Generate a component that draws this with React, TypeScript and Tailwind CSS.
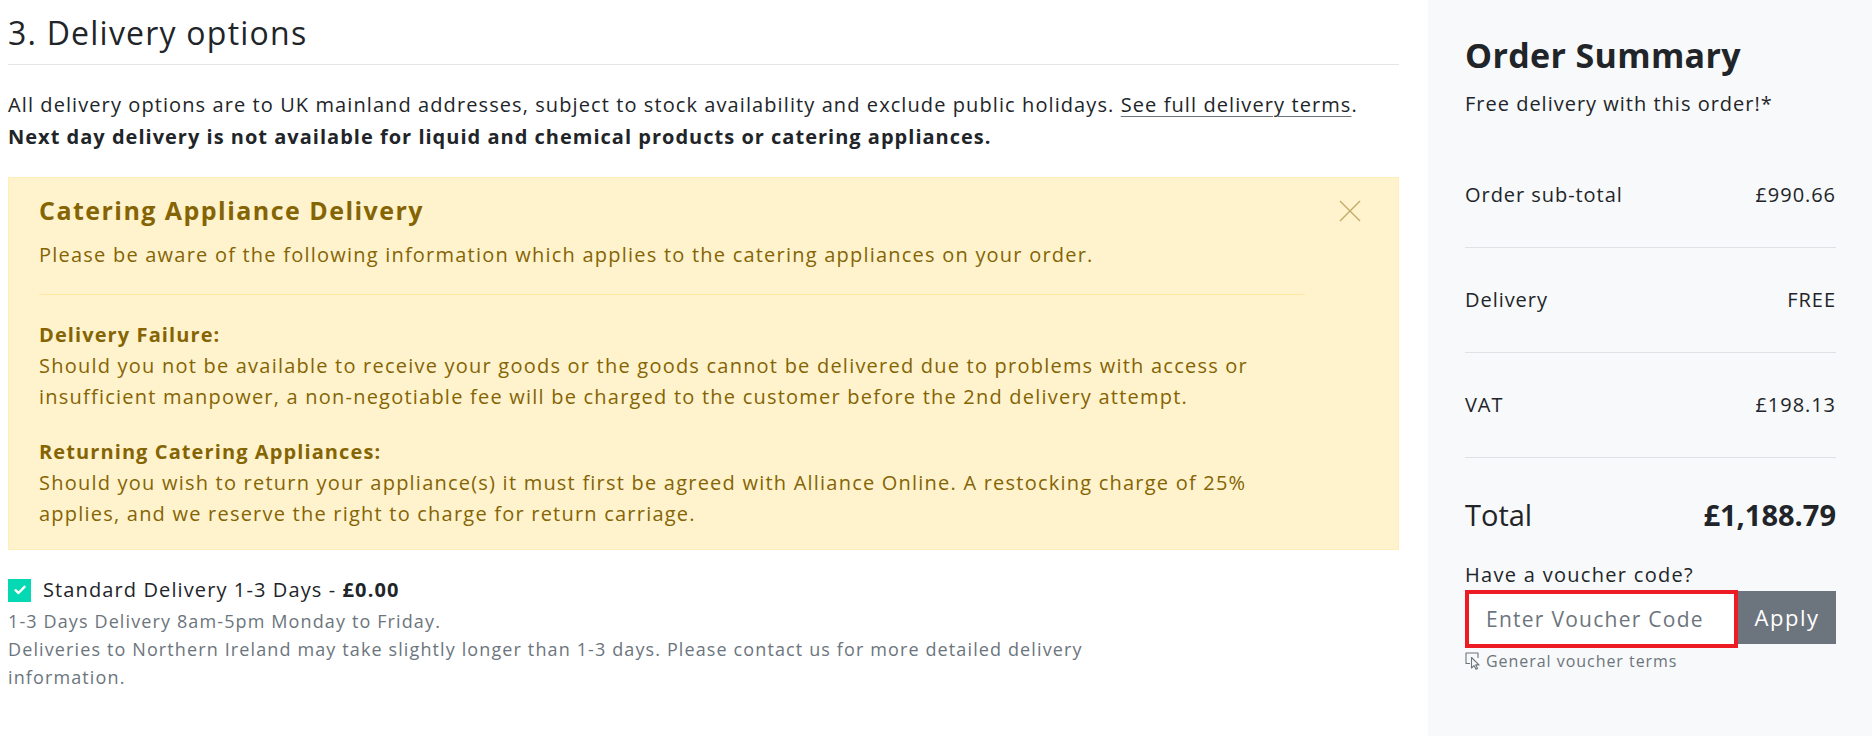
import React from 'react';

const font = { fontFamily: '"Open Sans", "Liberation Sans", sans-serif' };

function CloseIcon() {
  return (
    <svg width="22" height="22" viewBox="0 0 22 22" className="text-[#856404]/50">
      <path d="M1 1 L21 21 M21 1 L1 21" stroke="currentColor" strokeWidth="1.4" fill="none" />
    </svg>
  );
}

function CheckBox() {
  return (
    <span className="flex h-[23px] w-[23px] shrink-0 items-center justify-center bg-[#05d9b4]">
      <svg width="12" height="10" viewBox="0 0 12 10">
        <path d="M1.5 5.2 L4.5 8 L10.5 1.8" stroke="white" strokeWidth="2.4" fill="none" strokeLinecap="round" strokeLinejoin="round" />
      </svg>
    </span>
  );
}

// window outline with an arrow cursor in the corner
function TermsIcon() {
  return (
    <svg width="17" height="18" viewBox="0 0 17 18" fill="none" stroke="currentColor" strokeWidth="1.1" strokeLinejoin="round">
      <path d="M5 11.5 H1 V1 H13 V6" />
      <path d="M6.5 5.5 V16 L9 13.6 L11 17.3 L12.6 16.5 L10.7 12.9 H14 Z" />
    </svg>
  );
}

function SummaryRow({ label, value }: { label: string; value: string }) {
  return (
    <div className="flex justify-between border-b border-[#dee2e6] py-[40px] text-[20px] leading-[24px] tracking-[0.95px]">
      <span>{label}</span>
      <span>{value}</span>
    </div>
  );
}

export default function App() {
  return (
    <div className="flex h-[736px] w-[1872px] overflow-hidden bg-white text-[#212529]" style={font}>
      {/* delivery step */}
      <main className="ml-2 mr-[29px] w-[1391px]">
        <h2 className="border-b border-[#e5e5e5] pt-[13px] pb-[11px] text-[32px] leading-[40px] font-normal tracking-[1.22px]">
          3. Delivery options
        </h2>

        <div className="mt-[24px] text-[20px] leading-[32px]">
          <p className="tracking-[1.09px]">
            All delivery options are to UK mainland addresses, subject to stock availability and exclude public holidays.{' '}
            <a className="underline decoration-[#6c757d] decoration-1 underline-offset-4">See full delivery terms</a>.
          </p>
          <p className="font-bold tracking-[1.01px]">Next day delivery is not available for liquid and chemical products or catering appliances.</p>
        </div>

        <div className="relative mt-[24px] border border-[#ffeeba] bg-[#fff3cd] pt-[17px] pb-[20px] pl-[30px] pr-[93px] text-[#856404]">
          <button className="absolute right-[37px] top-[22px]">
            <CloseIcon />
          </button>
          <h4 className="text-[25px] leading-[30px] font-bold tracking-[1.46px]">Catering Appliance Delivery</h4>
          <div className="tracking-[1.22px]">
            <p className="mt-[14px] text-[20px] leading-[31px]">
              Please be aware of the following information which applies to the catering appliances on your order.
            </p>
            <hr className="mt-[24px] border-[#ffe8a1]" />
            <div className="mt-[24px] text-[20px] leading-[31px]">
              <p className="font-bold tracking-[1.1px]">Delivery Failure:</p>
              <p>
                <span className="block whitespace-nowrap">Should you not be available to receive your goods or the goods cannot be delivered due to problems with access or</span>
                <span className="block whitespace-nowrap">insufficient manpower, a non-negotiable fee will be charged to the customer before the 2nd delivery attempt.</span>
              </p>
              <p className="mt-[24px] font-bold tracking-[1.1px]">Returning Catering Appliances:</p>
              <p>
                <span className="block whitespace-nowrap">Should you wish to return your appliance(s) it must first be agreed with Alliance Online. A restocking charge of 25%</span>
                <span className="block whitespace-nowrap">applies, and we reserve the right to charge for return carriage.</span>
              </p>
            </div>
          </div>
        </div>

        <div className="mt-[25px]">
          <label className="flex items-center gap-[12px] text-[20px] leading-[30px] tracking-[1.11px]">
            <CheckBox />
            <span>
              Standard Delivery 1-3 Days - <b>£0.00</b>
            </span>
          </label>
          <div className="mt-[2px] text-[18px] leading-[28px] tracking-[1.12px] text-[#6c757d]">
            <p>1-3 Days Delivery 8am-5pm Monday to Friday.</p>
            <p>
              <span className="block whitespace-nowrap">Deliveries to Northern Ireland may take slightly longer than 1-3 days. Please contact us for more detailed delivery</span>
              <span className="block">information.</span>
            </p>
          </div>
        </div>
      </main>

      {/* order summary */}
      <aside className="flex-1 bg-[#f8f9fa] pt-[35px] pl-[37px] pr-[36px]">
        <h2 className="text-[34px] leading-[40px] font-bold tracking-[0.34px]">Order Summary</h2>
        <p className="mt-[14px] text-[20px] leading-[30px] tracking-[1px]">Free delivery with this order!*</p>

        <div className="mt-[24px]">
          <SummaryRow label="Order sub-total" value="£990.66" />
          <SummaryRow label="Delivery" value="FREE" />
          <SummaryRow label="VAT" value="£198.13" />
        </div>

        <div className="flex items-center justify-between pt-[39px] leading-[36px]">
          <span className="text-[29px]">Total</span>
          <span className="text-[29px] font-bold">£1,188.79</span>
        </div>

        <p className="mt-[27px] text-[20px] leading-[30px] tracking-[1.3px]">Have a voucher code?</p>
        <div className="flex items-start">
          <input
            className="h-[58px] w-[273px] border-4 border-[#ed1c24] bg-white pl-[17px] text-[21px] tracking-[1.26px] outline-none placeholder:text-[#6c757d]"
            placeholder="Enter Voucher Code"
            style={font}
          />
          <button className="mt-[1px] h-[53px] flex-1 bg-[#6c757d] text-[22px] tracking-[1.54px] text-white">Apply</button>
        </div>
        <a className="mt-[2px] flex items-center gap-[4px] text-[16px] leading-[22px] tracking-[0.96px] text-[#6c757d]">
          <TermsIcon />
          General voucher terms
        </a>
      </aside>
    </div>
  );
}
